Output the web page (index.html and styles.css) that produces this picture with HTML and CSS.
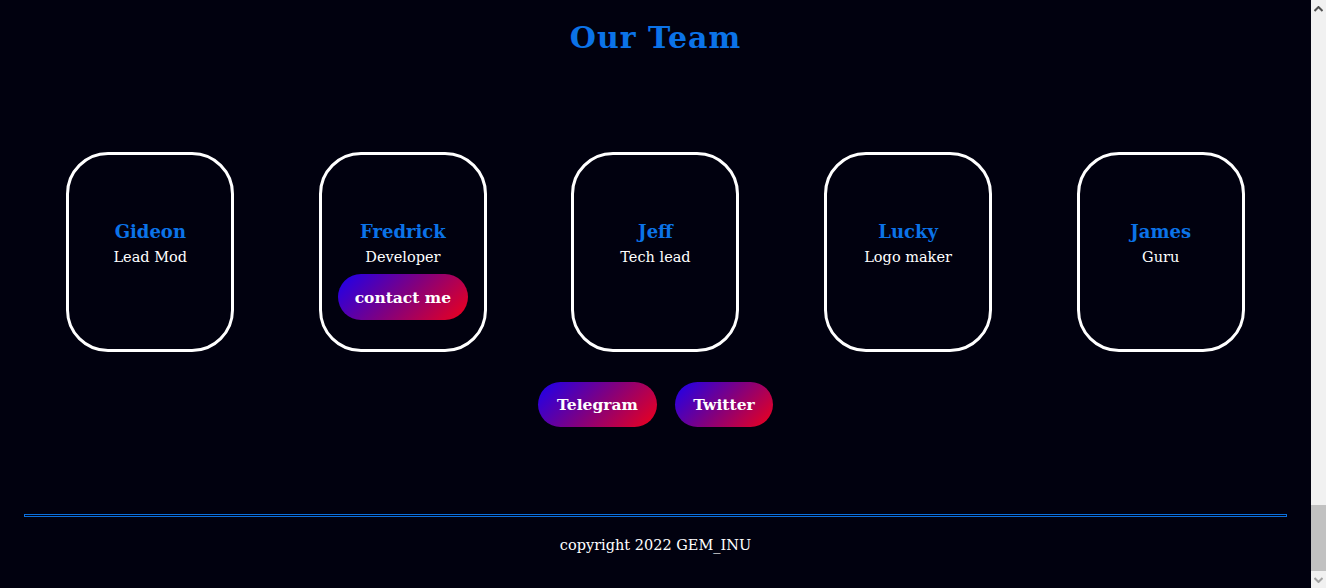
FILE: index.html
```html
<!DOCTYPE html>
<html lang="en">
<head>
<meta charset="utf-8">
<title>Our Team</title>
<link rel="stylesheet" href="styles.css">
</head>
<body>
<div class="page">
  <div class="content">
    <h1 class="title">Our Team</h1>
    <section class="team">
      <div class="card">
        <h3 class="name">Gideon</h3>
        <p class="role">Lead Mod</p>
      </div>
      <div class="card">
        <h3 class="name">Fredrick</h3>
        <p class="role">Developer</p>
        <a class="btn btn-contact" href="#">contact me</a>
      </div>
      <div class="card">
        <h3 class="name">Jeff</h3>
        <p class="role">Tech lead</p>
      </div>
      <div class="card">
        <h3 class="name">Lucky</h3>
        <p class="role">Logo maker</p>
      </div>
      <div class="card">
        <h3 class="name">James</h3>
        <p class="role">Guru</p>
      </div>
    </section>
    <div class="socials">
      <a class="btn btn-social" href="#">Telegram</a>
      <a class="btn btn-social" href="#">Twitter</a>
    </div>
    <hr class="rule">
    <footer class="footer">copyright 2022 GEM_INU</footer>
  </div>
  <div class="scrollbar">
    <div class="sb-arrow sb-up"><svg width="9" height="6" viewBox="0 0 9 6"><path d="M0.5 5 L4.5 1 L8.5 5" fill="none" stroke="#505050" stroke-width="2"/></svg></div>
    <div class="sb-track"><div class="sb-thumb"></div></div>
    <div class="sb-arrow sb-down"><svg width="9" height="6" viewBox="0 0 9 6"><path d="M0.5 1 L4.5 5 L8.5 1" fill="none" stroke="#a3a3a3" stroke-width="2"/></svg></div>
  </div>
</div>
</body>
</html>
```
FILE: styles.css
```css
html, body {
  margin: 0;
  padding: 0;
  height: 100%;
  background: #01010f;
  overflow: hidden;
}
body {
  font-family: "DejaVu Serif", "Liberation Serif", serif;
  color: #ffffff;
}
.page {
  display: flex;
  height: 588px;
}
.content {
  flex: 1;
  display: flex;
  flex-direction: column;
  align-items: stretch;
}
.title {
  margin: 19px 0 0;
  text-align: center;
  font-size: 30px;
  line-height: 37px;
  font-weight: bold;
  color: #0b73e8;
  letter-spacing: 1px;
}
.team {
  margin: 96px 24px 0;
  display: flex;
  justify-content: space-around;
}
.card {
  box-sizing: border-box;
  width: 168px;
  height: 200px;
  border: 3px solid #ffffff;
  border-radius: 42px;
  padding-top: 65px;
  display: flex;
  flex-direction: column;
  align-items: center;
}
.name {
  margin: 0;
  font-size: 18px;
  line-height: 24px;
  font-weight: bold;
  color: #0b73e8;
}
.role {
  margin: 3px 0 0;
  font-size: 14.5px;
  line-height: 20px;
  color: #ffffff;
}
.btn {
  display: flex;
  align-items: center;
  justify-content: center;
  box-sizing: border-box;
  border-radius: 24px;
  background: linear-gradient(135deg, #1a00f0 0%, #82007e 50%, #f00018 100%);
  color: #ffffff;
  text-decoration: none;
  font-weight: bold;
  font-size: 15.5px;
}
.btn-contact {
  margin-top: 7px;
  width: 130px;
  height: 46px;
}
.socials {
  margin-top: 30px;
  display: flex;
  justify-content: center;
  gap: 18px;
}
.btn-social {
  height: 45px;
  padding: 0 18px;
}
.socials .btn-social:first-child { width: 119px; }
.socials .btn-social:last-child { width: 98px; }
.rule {
  margin: 87px 24px 0;
  height: 1px;
  border: 1px solid #0a6fdc;
  background: transparent;
  box-sizing: content-box;
}
.footer {
  margin-top: 19px;
  text-align: center;
  font-size: 14.5px;
  line-height: 18px;
}
.scrollbar {
  width: 15px;
  height: 588px;
  background: #f1f1f1;
  display: flex;
  flex-direction: column;
}
.sb-arrow {
  height: 17px;
  display: flex;
  align-items: center;
  justify-content: center;
}
.sb-track {
  flex: 1;
  display: flex;
  flex-direction: column;
  justify-content: flex-end;
}
.sb-thumb {
  height: 66px;
  background: #c1c1c1;
}
```
